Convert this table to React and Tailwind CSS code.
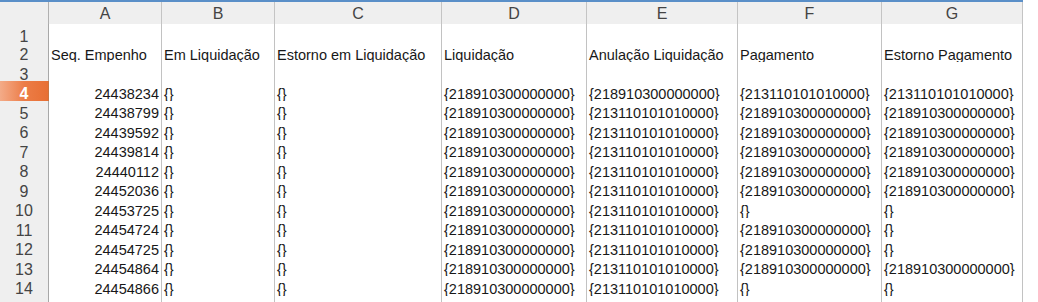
const COLS = ["A", "B", "C", "D", "E", "F", "G"];

const L = "{218910300000000}";
const P = "{213110101010000}";
const E = "{}";

const rows = [
  { n: 1, cells: ["", "", "", "", "", "", ""], h: "h-[18px]" },
  {
    n: 2,
    cells: [
      "Seq. Empenho",
      "Em Liquidação",
      "Estorno em Liquidação",
      "Liquidação",
      "Anulação Liquidação",
      "Pagamento",
      "Estorno Pagamento",
    ],
  },
  { n: 3, cells: ["", "", "", "", "", "", ""] },
  { n: 4, cells: ["24438234", E, E, L, L, P, P], active: true },
  { n: 5, cells: ["24438799", E, E, L, P, L, L] },
  { n: 6, cells: ["24439592", E, E, L, P, L, L] },
  { n: 7, cells: ["24439814", E, E, L, P, L, L] },
  { n: 8, cells: ["24440112", E, E, L, P, L, L] },
  { n: 9, cells: ["24452036", E, E, L, P, L, L] },
  { n: 10, cells: ["24453725", E, E, L, P, E, E] },
  { n: 11, cells: ["24454724", E, E, L, P, L, E] },
  { n: 12, cells: ["24454725", E, E, L, P, L, E] },
  { n: 13, cells: ["24454864", E, E, L, P, L, L] },
  { n: 14, cells: ["24454866", E, E, L, P, E, E] },
  { n: "", cells: ["", "", "", "", "", "", ""] },
];

const gridCols =
  "grid grid-cols-[49px_113px_113px_167px_145px_151px_144px_141px]";

function RowHeader({ n, active }) {
  if (active) {
    return (
      <div className="flex items-center justify-center border-r border-b border-[#c9743f] bg-linear-to-r from-[#f3ab88] via-[#ec7d47] to-[#e86f33] pt-[1px] text-[16px] font-bold text-white">
        {n}
      </div>
    );
  }
  return (
    <div className="flex items-center justify-center border-r border-b border-r-[#a8a8a8] border-b-[#c0c0c0] bg-[#efefef] pt-[1px] text-[16px] text-[#444]">
      {n}
    </div>
  );
}

function Cell({ value, col }) {
  const numeric = col === 0 && /^\d+$/.test(value);
  return (
    <div
      className={`flex items-center overflow-hidden whitespace-nowrap border-r border-b border-r-[#c2c2c2] border-b-[#d6d6d6] bg-white pt-[2px] text-[14.5px] text-[#181818] ${
        numeric ? "justify-end pr-[2px]" : "justify-start pl-[2px]"
      }`}
    >
      {value}
    </div>
  );
}

export default function App() {
  return (
    <div
      className="h-[302px] w-[1038px] overflow-hidden bg-white"
      style={{ fontFamily: '"Liberation Sans", Arial, sans-serif' }}
    >
      <div className="w-[1023px]">
        <div className="h-[2px] bg-[#5a8fc8]" />
        <div className={`${gridCols} h-[22px]`}>
          <div className="border-r border-b border-r-[#b0b0b0] border-b-[#bdbdbd] bg-[#efefef]" />
          {COLS.map((c) => (
            <div
              key={c}
              className="flex items-center justify-center border-r border-b border-r-[#c4c4c4] border-b-[#bdbdbd] bg-[#efefef] text-[16px] text-[#444]"
            >
              {c}
            </div>
          ))}
        </div>
        {rows.map((row, i) => (
          <div key={i} className={`${gridCols} ${row.h || "h-[19.5px]"}`}>
            <RowHeader n={row.n} active={row.active} />
            {row.cells.map((v, j) => (
              <Cell key={j} value={v} col={j} />
            ))}
          </div>
        ))}
      </div>
    </div>
  );
}
